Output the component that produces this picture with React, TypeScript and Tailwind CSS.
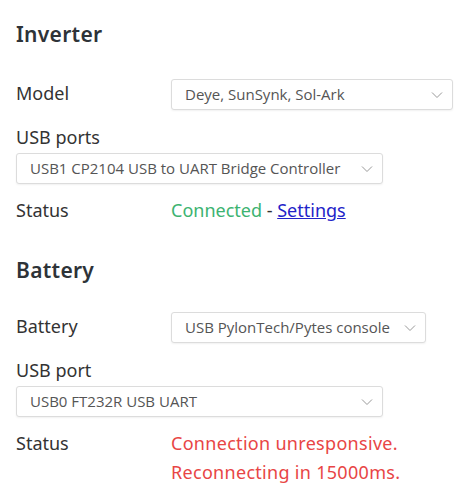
const Chevron = () => (
  <svg width="12" height="8" viewBox="0 0 12 8" className="shrink-0">
    <path d="M1 1.5 L6 6.5 L11 1.5" fill="none" stroke="#999" strokeWidth="1" />
  </svg>
);

const Select = ({ value, className }: { value: string; className: string }) => (
  <div
    className={`flex items-center justify-between gap-2 h-[31px] pl-[13px] pr-[9px] bg-white border border-[#dcdcdc] rounded-[3px] shadow-[0_1px_2px_rgba(0,0,0,0.06)] ${className}`}
  >
    <span className="text-[15px] text-[#555] font-['Open_Sans',sans-serif] whitespace-nowrap">{value}</span>
    <Chevron />
  </div>
);

const App = () => {
  return (
    <div className="w-[472px] h-[500px] bg-white px-4 pt-[20px] font-['Noto_Sans',sans-serif] text-[#333]">
      <h2 className="text-[21px] leading-[28px] font-semibold text-[#2e3338] tracking-[0.3px]">Inverter</h2>

      <div className="flex items-center mt-[31px]">
        <span className="w-[155px] text-[18px] leading-[24px] -mt-[3px]">Model</span>
        <Select value="Deye, SunSynk, Sol-Ark" className="w-[282px]" />
      </div>

      <div className="mt-[15px] text-[18px] leading-[24px]">USB ports</div>
      <Select value="USB1 CP2104 USB to UART Bridge Controller" className="w-[367px] mt-[4px]" />

      <div className="flex mt-[14px] text-[18px] leading-[24px]">
        <span className="w-[155px]">Status</span>
        <span>
          <span className="text-[#3cb371]">Connected</span> -{' '}
          <a href="#" className="text-[#2323c8] underline">Settings</a>
        </span>
      </div>

      <h2 className="mt-[34px] text-[21px] leading-[28px] font-semibold text-[#2e3338] tracking-[0.3px]">Battery</h2>

      <div className="flex items-center mt-[28px]">
        <span className="w-[155px] text-[18px] leading-[24px] -mt-[3px]">Battery</span>
        <Select value="USB PylonTech/Pytes console" className="w-[255px]" />
      </div>

      <div className="mt-[15px] text-[18px] leading-[24px]">USB port</div>
      <Select value="USB0 FT232R USB UART" className="w-[367px] mt-[4px]" />

      <div className="flex mt-[12px] text-[18px] leading-[29px]">
        <span className="w-[155px]">Status</span>
        <span className="text-[#e84545] tracking-[0.3px]">
          Connection unresponsive.
          <br />
          Reconnecting in 15000ms.
        </span>
      </div>
    </div>
  );
};

export default App;
